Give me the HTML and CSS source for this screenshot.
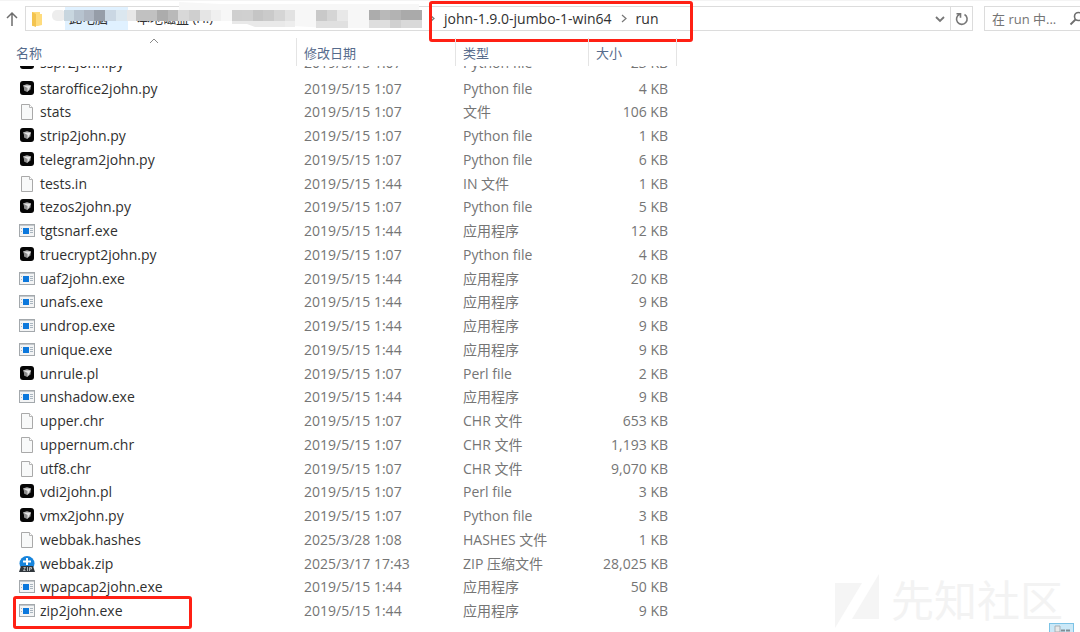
FILE: index.html
```
<!DOCTYPE html>
<html lang="zh-CN">
<head>
    <meta charset="UTF-8">
    <meta name="viewport" content="width=device-width, initial-scale=1.0">
    <title>run</title>
    <link rel="stylesheet" href="styles.css">
</head>
<body>
    <!-- File icons, reused by the rows -->
    <svg class="symbols" aria-hidden="true">
        <symbol id="script" viewBox="0 0 16 16">
            <rect x="1" y="0" width="14" height="14" rx="3" fill="#050505"/>
            <path d="M4 4.500 8 3l4 1.500-.5 4L8 11 5 9.500 5 7z" fill="#8d8d8d"/>
            <path d="M4 4.500h8L8.500 11V7z" fill="#e4e4e4"/>
        </symbol>
        <symbol id="doc" viewBox="0 0 16 16">
            <path d="M2.500.5h8l3 3v12h-11z" fill="#f8f9f9" stroke="#a9a9a9"/>
            <path d="M10.500.5v3h3" fill="#fff" stroke="#b5b5b5"/>
        </symbol>
        <symbol id="app" viewBox="0 0 16 16">
            <rect x=".5" y="1.500" width="15" height="12" fill="#f3f4f5" stroke="#a3a8ac"/>
            <path d="M1 2.500h14" stroke="#c3c8cc"/>
            <rect x="4" y="5" width="6" height="6" fill="#0c78dc"/>
            <path d="M11 5.500h3M11 7.500h3M11 9.500h3M2 5.500h1M2 8.500h1" stroke="#a9b5bf"/>
        </symbol>
        <symbol id="zip" viewBox="0 0 16 16">
            <circle cx="8" cy="7.500" r="7.500" fill="#1684dc"/>
            <path d="M7 2h2v2.500h3v2H9V9H7V6.500H4v-2h3z" fill="#fff"/>
            <path d="M2 10h12l2 6H0z" fill="#30363c"/>
            <path d="M4.500 11.500h2l-2 3h2M8.500 11v4M10.500 15v-3.500h2v1.500h-2" fill="none" stroke="#cfd3d6" stroke-width=".8"/>
        </symbol>
    </svg>

    <header class="toolbar">
        <button class="up" aria-label="上移">
            <svg width="12" height="16" viewBox="0 0 12 16"><path d="M6 15V2M1 7l5-5 5 5" fill="none" stroke="#6e6e6e" stroke-width="1.500"/></svg>
        </button>

        <div class="address">
            <svg class="folder" width="12" height="16" viewBox="0 0 12 16"><path d="M1 1h8v2h2v11l-4 1H1z" fill="#ffdc7d"/><path d="M1 1l4 2v13l-4-1.500z" fill="#f4c44f"/></svg>
            <nav class="path">
                <a class="crumb root" href="#">此电脑</a>
                <a class="crumb drive" href="#">本地磁盘 (H:)</a>
                <svg class="mosaic" width="376" height="28" viewBox="0 0 376 28" aria-hidden="true">
                    <path d="M127 2l41 2h199v24h-90l-75-4-18-3h-57z" fill="#f7f7f7"/>
                    <rect x="0" y="10" width="14" height="11" rx="5" fill="#ededed"/>
                    <path d="M12 10h10v11H12z" fill="#c8d6df"/>
                    <path d="M22 10h10v11H22z" fill="#b7c3cf"/>
                    <path d="M32 10h10v11H32z" fill="#adb5c1"/>
                    <path d="M42 10h11v11H42z" fill="#969da8"/>
                    <path d="M53 10h11v11H53z" fill="#cad7e3"/>
                    <path d="M64 10h11v11H64z" fill="#dbe7ef"/>
                    <path d="M75 10h9v11h-9z" fill="#e7e7e7"/>
                    <path d="M84 10h21v11H84z" fill="#c1c1c1"/>
                    <path d="M105 10h11v11h-11z" fill="#acacac"/>
                    <path d="M116 10h10v11h-10z" fill="#b9b9b9"/>
                    <path d="M126 10h11v11h-11z" fill="#d8d8d8"/>
                    <path d="M137 10h11v11h-11z" fill="#cfcfcf"/>
                    <path d="M148 10h11v11h-11z" fill="#e5e5e5"/>
                    <path d="M159 10h10v11h-10z" fill="#f0f0f0"/>
                    <path d="M180 10h10v11h-10z" fill="#cfcfcf"/>
                    <path d="M190 10h11v11h-11z" fill="#d0d0d0"/>
                    <path d="M201 10h10v11h-10z" fill="#c5c5c5"/>
                    <path d="M211 10h11v11h-11z" fill="#cacaca"/>
                    <path d="M222 10h11v11h-11z" fill="#d5d5d5"/>
                    <path d="M233 10h10v11h-10z" fill="#e2e2e2"/>
                    <path d="M180 21h53v6h-30l-8-3h-15z" fill="#e9e9e9"/>
                    <path d="M233 21h10v6h-10z" fill="#ededed"/>
                    <path d="M264 10h11v11h-11z" fill="#c9c9c9"/>
                    <path d="M275 10h10v11h-10z" fill="#d5d5d5"/>
                    <path d="M285 10h11v11h-11z" fill="#e8e8e8"/>
                    <path d="M264 21h32v7h-32z" fill="#e0e0e0"/>
                    <path d="M317 10h11v10h-11z" fill="#acacac"/>
                    <path d="M328 10h10v10h-10z" fill="#b9b9b9"/>
                    <path d="M338 10h11v10h-11z" fill="#b3b3b3"/>
                    <path d="M349 10h21v10h-21z" fill="#aaaaaa"/>
                    <path d="M317 20h21v8h-21z" fill="#dedede"/>
                    <path d="M338 20h11v8h-11z" fill="#d0d0d0"/>
                    <path d="M349 20h21v8h-21z" fill="#d9d9d9"/>
                </svg>
            </nav>
            <div class="target">
                <svg width="6" height="9" viewBox="0 0 6 9"><path d="M1 1l4 3.500L1 8" fill="none" stroke="#777" stroke-width="1.200"/></svg>
                <a class="crumb" href="#">john-1.9.0-jumbo-1-win64</a>
                <svg width="6" height="9" viewBox="0 0 6 9"><path d="M1 1l4 3.500L1 8" fill="none" stroke="#777" stroke-width="1.200"/></svg>
                <a class="crumb" href="#">run</a>
            </div>
            <button class="history" aria-label="历史记录">
                <svg width="12" height="8" viewBox="0 0 12 8"><path d="M2 2l4 4 4-4" fill="none" stroke="#777" stroke-width="1.800"/></svg>
            </button>
            <button class="refresh" aria-label="刷新">
                <svg width="14" height="14" viewBox="0 0 14 14"><path d="M9.500 2.500A5.300 5.300 0 1 1 4.500 2.300M1.500 1.700h4v4" fill="none" stroke="#777" stroke-width="1.600"/></svg>
            </button>
        </div>

        <div class="search">
            <input type="text" placeholder="在 run 中..." aria-label="搜索">
            <svg width="16" height="16" viewBox="0 0 16 16"><circle cx="9.500" cy="5.500" r="4" fill="none" stroke="#6e6e6e" stroke-width="1.600"/><path d="M6.500 8.500L1.500 13.500" stroke="#6e6e6e" stroke-width="1.800"/></svg>
        </div>
    </header>

    <main>
        <table class="files">
            <thead>
                <tr>
                    <th class="name">名称<svg class="sort" width="10" height="6" viewBox="0 0 10 6"><path d="M1 5l4-4 4 4" fill="none" stroke="#8a8a8a"/></svg></th>
                    <th class="date">修改日期</th>
                    <th class="type">类型</th>
                    <th class="size">大小</th>
                    <th class="rest"></th>
                </tr>
            </thead>
            <!-- First row, scrolled under the header -->
            <tbody class="scrolled">
                <tr><td><div><span><svg class="icon"><use href="#script"/></svg>sspr2john.py</span></div></td><td><div><span>2019/5/15 1:07</span></div></td><td><div><span>Python file</span></div></td><td><div><span>23 KB</span></div></td></tr>
            </tbody>
            <tbody>
                <tr><td><svg class="icon"><use href="#script"/></svg>staroffice2john.py</td><td>2019/5/15 1:07</td><td>Python file</td><td>4 KB</td></tr>
                <tr><td><svg class="icon"><use href="#doc"/></svg>stats</td><td>2019/5/15 1:07</td><td>文件</td><td>106 KB</td></tr>
                <tr><td><svg class="icon"><use href="#script"/></svg>strip2john.py</td><td>2019/5/15 1:07</td><td>Python file</td><td>1 KB</td></tr>
                <tr><td><svg class="icon"><use href="#script"/></svg>telegram2john.py</td><td>2019/5/15 1:07</td><td>Python file</td><td>6 KB</td></tr>
                <tr><td><svg class="icon"><use href="#doc"/></svg>tests.in</td><td>2019/5/15 1:44</td><td>IN 文件</td><td>1 KB</td></tr>
                <tr><td><svg class="icon"><use href="#script"/></svg>tezos2john.py</td><td>2019/5/15 1:07</td><td>Python file</td><td>5 KB</td></tr>
                <tr><td><svg class="icon"><use href="#app"/></svg>tgtsnarf.exe</td><td>2019/5/15 1:44</td><td>应用程序</td><td>12 KB</td></tr>
                <tr><td><svg class="icon"><use href="#script"/></svg>truecrypt2john.py</td><td>2019/5/15 1:07</td><td>Python file</td><td>4 KB</td></tr>
                <tr><td><svg class="icon"><use href="#app"/></svg>uaf2john.exe</td><td>2019/5/15 1:44</td><td>应用程序</td><td>20 KB</td></tr>
                <tr><td><svg class="icon"><use href="#app"/></svg>unafs.exe</td><td>2019/5/15 1:44</td><td>应用程序</td><td>9 KB</td></tr>
                <tr><td><svg class="icon"><use href="#app"/></svg>undrop.exe</td><td>2019/5/15 1:44</td><td>应用程序</td><td>9 KB</td></tr>
                <tr><td><svg class="icon"><use href="#app"/></svg>unique.exe</td><td>2019/5/15 1:44</td><td>应用程序</td><td>9 KB</td></tr>
                <tr><td><svg class="icon"><use href="#script"/></svg>unrule.pl</td><td>2019/5/15 1:07</td><td>Perl file</td><td>2 KB</td></tr>
                <tr><td><svg class="icon"><use href="#app"/></svg>unshadow.exe</td><td>2019/5/15 1:44</td><td>应用程序</td><td>9 KB</td></tr>
                <tr><td><svg class="icon"><use href="#doc"/></svg>upper.chr</td><td>2019/5/15 1:07</td><td>CHR 文件</td><td>653 KB</td></tr>
                <tr><td><svg class="icon"><use href="#doc"/></svg>uppernum.chr</td><td>2019/5/15 1:07</td><td>CHR 文件</td><td>1,193 KB</td></tr>
                <tr><td><svg class="icon"><use href="#doc"/></svg>utf8.chr</td><td>2019/5/15 1:07</td><td>CHR 文件</td><td>9,070 KB</td></tr>
                <tr><td><svg class="icon"><use href="#script"/></svg>vdi2john.pl</td><td>2019/5/15 1:07</td><td>Perl file</td><td>3 KB</td></tr>
                <tr><td><svg class="icon"><use href="#script"/></svg>vmx2john.py</td><td>2019/5/15 1:07</td><td>Python file</td><td>3 KB</td></tr>
                <tr><td><svg class="icon"><use href="#doc"/></svg>webbak.hashes</td><td>2025/3/28 1:08</td><td>HASHES 文件</td><td>1 KB</td></tr>
                <tr><td><svg class="icon"><use href="#zip"/></svg>webbak.zip</td><td>2025/3/17 17:43</td><td>ZIP 压缩文件</td><td>28,025 KB</td></tr>
                <tr><td><svg class="icon"><use href="#app"/></svg>wpapcap2john.exe</td><td>2019/5/15 1:44</td><td>应用程序</td><td>50 KB</td></tr>
                <tr class="marked"><td><svg class="icon"><use href="#app"/></svg>zip2john.exe</td><td>2019/5/15 1:44</td><td>应用程序</td><td>9 KB</td></tr>
            </tbody>
        </table>
    </main>

    <div class="watermark">
        <svg width="44" height="54" viewBox="0 0 44 54"><path d="M0 9h27L0 54zM44 0v45H17z" fill="#f5f5f5"/></svg>
        先知社区
    </div>
    <button class="view" aria-label="详细信息">
        <svg width="16" height="8" viewBox="0 0 16 8"><path d="M1 2h5v6H1z" fill="#e8e8e8" stroke="#a5b0b6"/><path d="M7 6.500h4M12 6.500h4" stroke="#7f8d95" stroke-width="2"/></svg>
    </button>
</body>
</html>
```
FILE: styles.css
```
*,
*::before,
*::after {
    box-sizing: border-box;
}

body {
    display: flex;
    flex-direction: column;
    height: 100vh;
    margin: 0;
    overflow: hidden;
    background: #fff;
    border-top: 1px solid #f4f4f4;
    font-family: "Open Sans", "Noto Sans CJK SC", sans-serif;
    font-size: 13px;
    color: #303030;
}

button {
    display: flex;
    align-items: center;
    justify-content: center;
    padding: 0;
    border: 0;
    background: none;
}

a {
    color: inherit;
    text-decoration: none;
}

.symbols {
    position: absolute;
    width: 0;
    height: 0;
}

/* Address bar */
.toolbar {
    display: flex;
    flex: none;
    height: 30px;
    padding: 5px 0 0 5px;
}

.up {
    width: 13px;
    margin-right: 7px;
}

.address {
    display: flex;
    flex: 1;
    align-items: center;
    margin-right: 11px;
    border: 1px solid #dcdcdc;
}

.folder {
    margin: 0 22px 0 5px;
}

.path {
    display: flex;
    position: relative;
    align-self: stretch;
    width: 364px;
}

.crumb {
    line-height: 23px;
    white-space: nowrap;
}

.root {
    width: 63px;
    padding-left: 4px;
    background: #e0f1ff;
}

.drive {
    padding-left: 9px;
}

.mosaic {
    position: absolute;
    top: -7px;
    left: -13px;
}

.target {
    display: flex;
    position: relative;
    align-items: center;
    gap: 9px;
    font-size: 14px;
}

/* Red highlight round the folder names */
.target::before {
    content: "";
    position: absolute;
    top: -6px;
    left: 0;
    width: 264px;
    height: 41px;
    border: 3px solid #ff2014;
    border-radius: 3px;
    pointer-events: none;
}

.history {
    width: 20px;
    height: 100%;
    margin-left: auto;
}

.refresh {
    width: 22px;
    height: 100%;
    border-left: 1px solid #dcdcdc;
}

.search {
    display: flex;
    width: 96px;
    align-items: center;
    overflow: hidden;
    border: 1px solid #dcdcdc;
    border-right: 0;
}

.search input {
    flex: none;
    width: 84px;
    padding: 0 0 0 7px;
    border: 0;
    outline: 0;
    font: inherit;
}

.search input::placeholder {
    color: #757575;
}

.search svg {
    flex: none;
}

/* File list */
main {
    flex: 1;
    min-height: 0;
    padding: 7px 0 9px;
}

.files {
    width: 100%;
    height: 100%;
    table-layout: fixed;
    border-collapse: separate;
    border-spacing: 0;
    font-size: 14px;
    color: #757575;
}

th {
    position: relative;
    height: 28px;
    padding: 0 0 0 7px;
    border-right: 1px solid #e4e4e4;
    font-size: 13px;
    font-weight: 400;
    text-align: left;
    color: #566b8c;
}

.name {
    width: 297px;
    padding-left: 16px;
}

.date {
    width: 159px;
}

.type {
    width: 133px;
}

.size {
    width: 88px;
}

th.rest {
    border: 0;
}

.sort {
    position: absolute;
    top: 0;
    left: 149px;
}

td {
    padding: 0 0 0 7px;
    line-height: 20px;
    white-space: nowrap;
}

td:first-child {
    position: relative;
    padding-left: 19px;
    color: #303030;
}

td:nth-child(4) {
    padding-right: 9px;
    text-align: right;
}

.scrolled td {
    height: 9px;
    line-height: 24px;
    vertical-align: top;
}

.scrolled div {
    display: flex;
    height: 9px;
    align-items: flex-end;
    overflow: hidden;
}

.scrolled td:nth-child(4) div {
    justify-content: flex-end;
}

.icon {
    width: 16px;
    height: 16px;
    margin-right: 5px;
    vertical-align: -3px;
}

.marked td:first-child::after {
    content: "";
    position: absolute;
    top: -3px;
    left: 13px;
    width: 179px;
    height: 33px;
    border: 3px solid #ff2014;
    border-radius: 3px;
}

.watermark {
    display: flex;
    position: absolute;
    right: 17px;
    bottom: 4px;
    align-items: center;
    gap: 12px;
    font-size: 43px;
    line-height: 54px;
    color: #f3f3f3;
}

.view {
    position: absolute;
    right: 6px;
    bottom: 0;
    width: 25px;
    height: 9px;
    border: 1px solid #7cc3e6;
    border-bottom: 0;
    background: #cbe8f7;
}
```
